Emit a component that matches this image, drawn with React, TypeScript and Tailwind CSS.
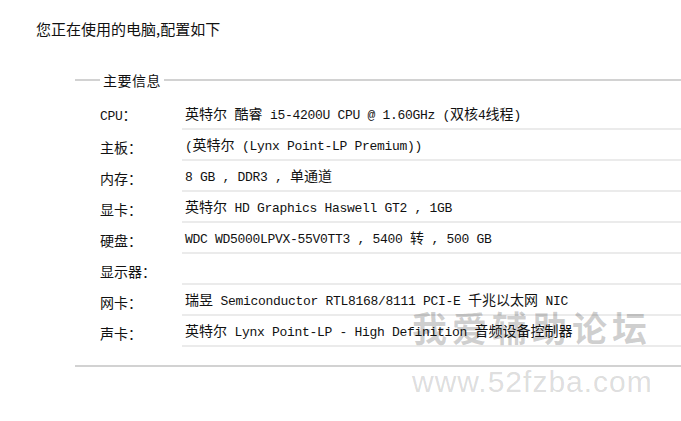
import React from "react";

const rows: [string, string][] = [
  ["CPU：", "英特尔 酷睿 i5-4200U CPU @ 1.60GHz (双核4线程)"],
  ["主板：", "(英特尔 (Lynx Point-LP Premium))"],
  ["内存：", "8 GB , DDR3 , 单通道"],
  ["显卡：", "英特尔 HD Graphics Haswell GT2 , 1GB"],
  ["硬盘：", "WDC WD5000LPVX-55V0TT3 , 5400 转 , 500 GB"],
  ["显示器：", ""],
  ["网卡：", "瑞昱 Semiconductor RTL8168/8111 PCI-E 千兆以太网 NIC"],
  ["声卡：", "英特尔 Lynx Point-LP - High Definition 音频设备控制器"],
];

function Mixed({ text }: { text: string }) {
  const parts = text.split(/([\u3000-\u9fff\uff00-\uffef]+)/).filter((p) => p !== "");
  return (
    <div className="whitespace-pre leading-[20px]">
      {parts.map((p, i) =>
        /[\u3000-\u9fff\uff00-\uffef]/.test(p) ? (
          <span key={i} className="text-[14px] font-['Noto_Sans_CJK_SC',sans-serif]">
            {p}
          </span>
        ) : (
          <span key={i} className="text-[13px] tracking-[-0.3px] font-['Liberation_Mono','Noto_Sans_CJK_SC',monospace]">
            {p}
          </span>
        )
      )}
    </div>
  );
}

export default function App() {
  return (
    <div className="relative w-[681px] h-[421px] bg-white overflow-hidden text-[#111]">
      <div className="pl-[36px] pt-[19px] h-[20px] box-content text-[15px] leading-[20px] font-['Noto_Sans_CJK_SC',sans-serif]">
        您正在使用的电脑,配置如下
      </div>
      <div className="ml-[75px] mt-[31px]">
        <div className="flex items-center h-[20px]">
          <div className="w-[25px] h-[2px] bg-[#d2d2d2]" />
          <div className="px-[3px] text-[14px] leading-[20px] tracking-[0.5px] font-['Noto_Sans_CJK_SC',sans-serif]">
            主要信息
          </div>
          <div className="flex-1 h-[2px] bg-[#d2d2d2]" />
        </div>
        <div className="mt-[9px] flex flex-col">
          {rows.map(([label, value]) => (
            <div key={label} className="flex h-[31px]">
              <div className="w-[107px] pl-[25px] pt-[2px] flex items-center">
                <Mixed text={label} />
              </div>
              <div className="flex-1 flex items-center pl-[3px] pt-[2px] border-b-2 border-[#ebebeb]">
                <Mixed text={value} />
              </div>
            </div>
          ))}
        </div>
        <div className="mt-[18px] h-[2px] bg-[#d2d2d2]" />
      </div>
      <div className="absolute left-[412px] top-[309px] text-[35px] leading-[35px] font-bold tracking-[5px] text-[rgba(0,0,0,0.19)] font-['Noto_Sans_CJK_SC',sans-serif] whitespace-nowrap">
        我爱辅助论坛
      </div>
      <div className="absolute left-[412px] top-[367px] text-[30px] leading-[30px] tracking-[1px] text-[rgba(0,0,0,0.15)] font-['Liberation_Sans',sans-serif] whitespace-nowrap">
        www.52fzba.com
      </div>
    </div>
  );
}
